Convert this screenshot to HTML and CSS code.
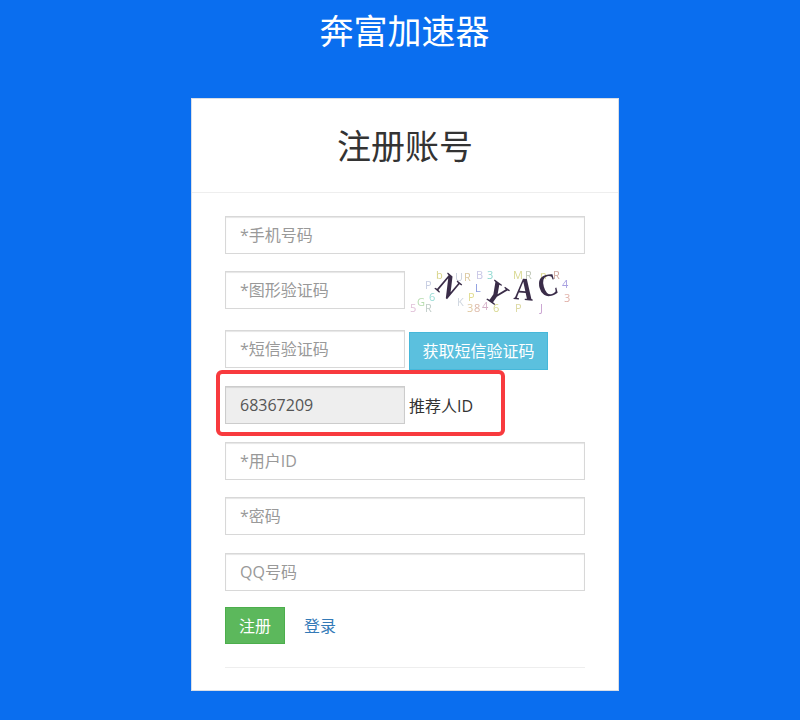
FILE: index.html
```html
<!DOCTYPE html>
<html lang="zh-CN">
<head>
<meta charset="utf-8">
<title>奔富加速器</title>
<link rel="stylesheet" href="styles.css">
</head>
<body>
<h1 class="brand">奔富加速器</h1>
<main class="card">
  <h2 class="card-title">注册账号</h2>
  <form class="form">
    <input class="field field-full gap-17" placeholder="*手机号码">
    <div class="row gap-21">
      <input class="field field-half" placeholder="*图形验证码">
      <svg class="captcha" viewBox="0 0 165 46" width="165" height="46" aria-hidden="true">
        <g class="noise">
          <text x="31" y="11" fill="#d8d48a">b</text><text x="20" y="21" fill="#c6cde2">P</text>
          <text x="24" y="33" fill="#9adcd6">6</text><text x="50" y="13" fill="#c9d0dc">U</text>
          <text x="59" y="13" fill="#dcc9a0">R</text><text x="71" y="11" fill="#c8c6e6">B</text>
          <text x="70" y="24" fill="#8a9ae0">L</text><text x="63" y="33" fill="#e0dc90">P</text>
          <text x="52" y="38" fill="#cfd6e0">K</text><text x="62" y="44" fill="#e0c8a0">3</text>
          <text x="69" y="44" fill="#dcb8a8">8</text><text x="77" y="42" fill="#d4b0c8">4</text>
          <text x="82" y="11" fill="#8ed8d0">3</text>
          <text x="88" y="44" fill="#d8d890">6</text>
          <text x="108" y="11" fill="#d8d890">M</text><text x="120" y="11" fill="#c0c8b8">R</text>
          <text x="135" y="11" fill="#dcd890">n</text><text x="148" y="11" fill="#d0a8a0">R</text>
          <text x="157" y="20" fill="#a8a0e0">4</text><text x="159" y="34" fill="#e0b0a8">3</text>
          <text x="12" y="38" fill="#b8dcb0">G</text>
          <text x="5" y="44" fill="#e0c0d8">5</text><text x="20" y="44" fill="#c0ccc8">R</text>
          <text x="135" y="44" fill="#c8a0d0">J</text><text x="110" y="44" fill="#dcd8a0">P</text>
        </g>
        <g class="letters">
          <text transform="translate(43 19) rotate(40) scale(.85 1) translate(0 10)">N</text>
          <text transform="translate(91 26) rotate(35) scale(.85 1) translate(0 10)">Y</text>
          <text transform="translate(119 22) rotate(5) scale(.85 1) translate(0 10)">A</text>
          <text transform="translate(143 18) rotate(-15) scale(.85 1) translate(0 10)">C</text>
        </g>
      </svg>
    </div>
    <div class="row gap-18">
      <input class="field field-half" placeholder="*短信验证码">
      <button type="button" class="btn btn-info">获取短信验证码</button>
    </div>
    <div class="row gap-18 referrer">
      <input class="field field-half field-readonly" value="68367209" readonly>
      <span class="row-label">推荐人ID</span>
      <div class="highlight"></div>
    </div>
    <input class="field field-full gap-17" placeholder="*用户ID">
    <input class="field field-full gap-18" placeholder="*密码">
    <input class="field field-full gap-16" placeholder="QQ号码">
    <div class="actions">
      <button type="button" class="btn btn-success">注册</button>
      <a class="link" href="#">登录</a>
    </div>
    <hr class="rule">
  </form>
</main>
</body>
</html>
```
FILE: styles.css
```css
* { box-sizing: border-box; }
html, body { margin: 0; padding: 0; }
body {
  height: 720px;
  overflow: hidden;
  background: #0a6eef;
  color: #333;
  font-family: "Open Sans", "Noto Sans CJK SC", sans-serif;
  font-size: 16px;
}
.brand {
  margin: 0;
  height: 98px;
  padding: 6px 0 0 9px;
  font-size: 34px;
  font-weight: 400;
  line-height: 50px;
  color: #fff;
  text-align: center;
}
.card {
  width: 428px;
  height: 593px;
  margin-left: 191px;
  background: #fff;
  border: 1px solid #d9dee6;
}
.card-title {
  margin: 0;
  height: 94px;
  border-bottom: 1px solid #eee;
  font-size: 34px;
  font-weight: 400;
  line-height: 94px;
  text-align: center;
  color: #333;
}
.form {
  padding: 23px 33px 0;
  display: flex;
  flex-direction: column;
  align-items: flex-start;
}
.field {
  display: block;
  height: 38px;
  padding: 0 14px 1px;
  border: 1px solid #d8d8d8;
  box-shadow: inset 0 1px 1px rgba(0, 0, 0, .1);
  background: #fff;
  color: #555;
  font: inherit;
  outline: none;
}
.field::placeholder { color: #999; opacity: 1; }
.field-full { width: 360px; }
.field-half { width: 180px; }
.field-readonly { background: #eee; border-color: #ccc; padding-bottom: 0; }
.gap-16 { margin-bottom: 16px; }
.gap-17 { margin-bottom: 17px; }
.gap-18 { margin-bottom: 18px; }
.gap-21 { margin-bottom: 21px; }
.row {
  display: flex;
  align-items: flex-start;
  height: 38px;
}
.referrer { position: relative; align-items: center; }
.row-label { margin-left: 4px; color: #333; }
.highlight {
  position: absolute;
  left: -9px;
  top: -16px;
  width: 289px;
  height: 66px;
  border: 4px solid #f83a3e;
  border-radius: 6px;
  pointer-events: none;
}
.captcha { display: block; margin-top: -3px; filter: blur(0.35px); }
.noise text { font: 11px "Open Sans", sans-serif; }
.letters text {
  font: 700 32px "Liberation Serif", serif;
  fill: #3a2c48;
  text-anchor: middle;
}
.btn {
  height: 38px;
  border: 1px solid transparent;
  color: #fff;
  font: inherit;
  padding: 0 0 2px;
}
.btn-info {
  width: 139px;
  margin: 2px 0 0 4px;
  background: #5bc0de;
  border-color: #46b8da;
}
.btn-success {
  width: 60px;
  height: 37px;
  background: #5cb85c;
  border-color: #4cae4c;
}
.actions {
  display: flex;
  align-items: center;
  height: 37px;
}
.link {
  margin: -2px 0 0 19px;
  color: #337ab7;
  text-decoration: none;
}
.rule {
  width: 360px;
  margin: 23px 0 0;
  border: 0;
  border-top: 1px solid #eee;
}
```
